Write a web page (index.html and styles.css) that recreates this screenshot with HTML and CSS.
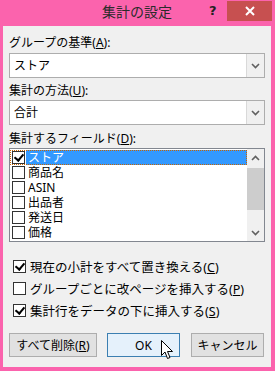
FILE: index.html
```html
<!DOCTYPE html>
<html lang="ja">
<head>
  <meta charset="UTF-8">
  <title>集計の設定</title>
  <link rel="stylesheet" href="styles.css">
</head>
<body>
  <div class="window">
    <div class="titlebar">
      <span class="title">集計の設定</span>
      <span class="help">?</span>
      <span class="close">
        <svg width="10" height="10" viewBox="0 0 10 10"><path d="M1 1 L9 9 M9 1 L1 9" stroke="#fff" stroke-width="2"/></svg>
      </span>
    </div>

    <div class="content">
      <div class="label">グループの基準(<u>A</u>):</div>
      <div class="combo">
        <span class="combo-text">ストア</span>
        <span class="combo-btn"><svg width="9" height="6" viewBox="0 0 9 6"><path d="M1 1 L4.5 4.5 L8 1" fill="none" stroke="#606060" stroke-width="1.6"/></svg></span>
      </div>

      <div class="label label-2">集計の方法(<u>U</u>):</div>
      <div class="combo combo-2">
        <span class="combo-text">合計</span>
        <span class="combo-btn"><svg width="9" height="6" viewBox="0 0 9 6"><path d="M1 1 L4.5 4.5 L8 1" fill="none" stroke="#606060" stroke-width="1.6"/></svg></span>
      </div>

      <div class="label label-3">集計するフィールド(<u>D</u>):</div>
      <div class="listbox">
        <div class="items">
          <div class="item selected"><span class="box checked"></span><span class="item-text">ストア</span></div>
          <div class="item"><span class="box"></span><span class="item-text">商品名</span></div>
          <div class="item"><span class="box"></span><span class="item-text">ASIN</span></div>
          <div class="item"><span class="box"></span><span class="item-text">出品者</span></div>
          <div class="item"><span class="box"></span><span class="item-text">発送日</span></div>
          <div class="item"><span class="box"></span><span class="item-text">価格</span></div>
        </div>
        <div class="scrollbar">
          <span class="arrow"><svg width="9" height="6" viewBox="0 0 9 6"><path d="M1 5 L4.5 1.5 L8 5" fill="none" stroke="#606060" stroke-width="1.6"/></svg></span>
          <span class="thumb"></span>
          <span class="arrow arrow-down"><svg width="9" height="6" viewBox="0 0 9 6"><path d="M1 1 L4.5 4.5 L8 1" fill="none" stroke="#606060" stroke-width="1.6"/></svg></span>
        </div>
      </div>

      <div class="options">
        <div class="option"><span class="box checked"></span><span>現在の小計をすべて置き換える(<u>C</u>)</span></div>
        <div class="option"><span class="box"></span><span>グループごとに改ページを挿入する(<u>P</u>)</span></div>
        <div class="option"><span class="box checked"></span><span>集計行をデータの下に挿入する(<u>S</u>)</span></div>
      </div>

      <div class="buttons">
        <button class="btn btn-wide">すべて削除(<u>R</u>)</button>
        <button class="btn btn-default">OK</button>
        <button class="btn">キャンセル</button>
        <svg class="cursor" width="13" height="20" viewBox="0 0 13 20">
          <path d="M0.5 0.5 L0.5 15.5 L4 12 L6.5 18.5 L9 17.5 L6.5 11.5 L11.5 11.5 Z" fill="#fff" stroke="#000" stroke-width="1" stroke-linejoin="round"/>
        </svg>
      </div>
    </div>
  </div>
</body>
</html>
```

FILE: styles.css
```css
body {
  margin: 0;
  font-family: "Noto Sans", "Noto Sans CJK JP", sans-serif;
  font-size: 12px;
  color: #000;
}
.window {
  width: 275px;
  height: 371px;
  background: #fb63ad;
  box-sizing: border-box;
  padding: 0 4px 4px 3px;
  display: flex;
  flex-direction: column;
}
.titlebar {
  height: 26px;
  position: relative;
  flex-shrink: 0;
}
.title {
  position: absolute;
  left: 0;
  right: 0;
  top: 2px;
  text-align: center;
  font-size: 14px;
  line-height: 20px;
  color: #2b2b2b;
}
.help {
  position: absolute;
  left: 206px;
  top: 2px;
  font-family: "DejaVu Sans", sans-serif;
  font-weight: bold;
  font-size: 13px;
  line-height: 18px;
  color: #222;
}
.close {
  position: absolute;
  left: 224px;
  top: 1px;
  width: 45px;
  height: 20px;
  background: #c75050;
  display: flex;
  align-items: center;
  justify-content: center;
}
.content {
  flex: 1;
  background: #f0f0f0;
  padding: 9px 7px 0 6px;
  display: flex;
  flex-direction: column;
}
.label {
  line-height: 15px;
  height: 15px;
}
.label u, .option u, .btn u {
  text-decoration-thickness: 1px;
  text-underline-offset: 1px;
}
.label-2 { margin-top: 5px; }
.label-3 { margin-top: 6px; }
.combo {
  margin-top: 3px;
  margin-right: -1px;
  height: 25px;
  box-sizing: border-box;
  border: 1px solid #adadad;
  background: #fff;
  display: flex;
}
.combo-2 { margin-top: 2px; }
.combo-text {
  flex: 1;
  padding-left: 4px;
  line-height: 23px;
}
.combo-btn {
  width: 17px;
  border-left: 1px solid #d9d9d9;
  background: #f0f0f0;
  display: flex;
  align-items: center;
  justify-content: center;
}
.listbox {
  margin-top: 2px;
  margin-right: -1px;
  height: 94px;
  box-sizing: border-box;
  border: 1px solid #828790;
  background: #fff;
  display: flex;
}
.items {
  flex: 1;
  padding-top: 1px;
}
.item {
  height: 15px;
  display: flex;
  align-items: center;
  padding-left: 2px;
  box-sizing: border-box;
}
.item.selected {
  outline: 1px dotted #c86400;
  outline-offset: -1px;
}
.item-text {
  flex: 1;
  height: 15px;
  line-height: 15px;
  padding-left: 2px;
  margin-left: 1px;
  font-size: 12px;
  overflow: hidden;
}
.item.selected .item-text {
  background: #3399ff;
  color: #fff;
}
.box {
  display: inline-block;
  width: 13px;
  height: 13px;
  box-sizing: border-box;
  border: 1px solid #333;
  background: #fff;
  position: relative;
  flex-shrink: 0;
}
.box.checked::after {
  content: "";
  position: absolute;
  left: 3px;
  top: 0px;
  width: 4px;
  height: 7px;
  border: solid #000;
  border-width: 0 2px 2px 0;
  transform: rotate(40deg);
}
.scrollbar {
  width: 17px;
  background: #f0f0f0;
  display: flex;
  flex-direction: column;
}
.arrow {
  height: 17px;
  display: flex;
  align-items: center;
  justify-content: center;
}
.thumb {
  margin-top: 2px;
  height: 42px;
  background: #cdcdcd;
}
.arrow-down {
  margin-top: auto;
}
.options {
  margin-top: 13px;
  display: flex;
  flex-direction: column;
}
.option {
  height: 22px;
  display: flex;
  align-items: center;
  gap: 4px;
  padding-left: 4px;
  font-size: 12.5px;
}
.buttons {
  margin-top: 12px;
  display: flex;
  gap: 10px;
  position: relative;
}
.btn {
  width: 73px;
  height: 24px;
  box-sizing: border-box;
  border: 1px solid #adadad;
  background: #e1e1e1;
  font-family: inherit;
  font-size: 12px;
  color: #000;
  padding: 0;
}
.btn-wide { width: 88px; }
.btn-default {
  border-color: #3c7fb1;
  background: #e5f1fb;
  margin-right: 1px;
}
.cursor {
  position: absolute;
  left: 152px;
  top: 7px;
}
```
